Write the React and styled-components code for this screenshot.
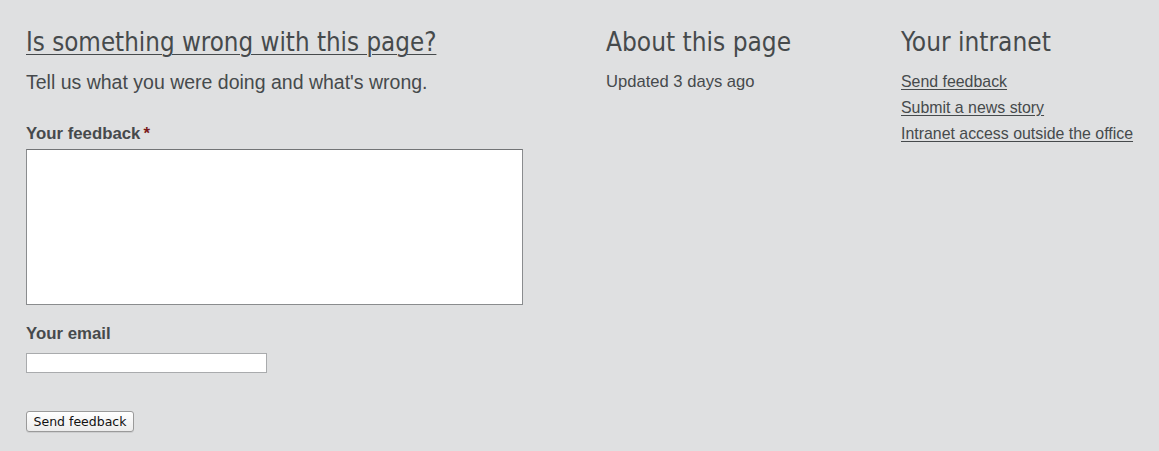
import React from "react";
import styled, { createGlobalStyle } from "styled-components";

const Global = createGlobalStyle`
  html, body { margin: 0; padding: 0; background: #dfe0e1; }
  body { font-family: "Liberation Sans", Arial, sans-serif; color: #464a4c; }
`;

const Page = styled.div`
  display: flex;
  padding: 26px 26px 0 26px;
  min-height: 451px;
  box-sizing: border-box;
`;

const Column = styled.section`
  width: ${(p) => p.$width || "auto"};
  flex: ${(p) => (p.$grow ? 1 : "none")};
  display: flex;
  flex-direction: column;
`;

const Heading = styled.h2`
  margin: 0;
  font-family: "DejaVu Sans Condensed", "Liberation Sans", sans-serif;
  font-weight: normal;
  font-size: ${(p) => p.$size || 26}px;
  line-height: 32px;
  color: #464a4c;
  white-space: nowrap;
`;

const HeadingLink = styled.a`
  color: inherit;
  text-decoration: underline;
  text-underline-offset: 3px;
  text-decoration-thickness: 1px;
`;

const Lead = styled.p`
  margin: 11px 0 0 0;
  font-size: 19.5px;
  line-height: 26px;
`;

const Label = styled.label`
  display: block;
  font-weight: bold;
  font-size: 16.8px;
  line-height: 20px;
  margin-top: ${(p) => p.$top}px;
`;

const Required = styled.span`
  color: #7a1a1a;
  margin-left: 3px;
`;

const TextArea = styled.textarea`
  display: block;
  width: 497px;
  height: 156px;
  box-sizing: border-box;
  margin-top: 5px;
  border: 1px solid #8a8c8e;
  border-top-color: #727476;
  background: #fff;
  resize: none;
  padding: 2px;
`;

const TextInput = styled.input`
  display: block;
  width: 241px;
  height: 20px;
  box-sizing: border-box;
  margin-top: 9px;
  border: 1px solid #a9abad;
  background: #fff;
  padding: 1px 2px;
`;

const Button = styled.button`
  align-self: flex-start;
  margin-top: 38px;
  height: 21px;
  width: 108px;
  padding: 0;
  font-family: "DejaVu Sans", "Liberation Sans", sans-serif;
  font-size: 12.5px;
  color: #111;
  background: linear-gradient(#ffffff, #ececec);
  border: 1px solid #9a9a9a;
  border-radius: 3px;
  box-shadow: 0 1px 0 rgba(0, 0, 0, 0.08);
`;

const Meta = styled.p`
  margin: 11px 0 0 0;
  font-size: 16.6px;
  line-height: 26px;
`;

const LinkList = styled.ul`
  list-style: none;
  margin: 11px 0 0 0;
  padding: 0;
`;

const LinkItem = styled.li`
  font-size: 15.9px;
  line-height: 26px;
  white-space: nowrap;
`;

const Link = styled.a`
  color: #464a4c;
  text-decoration: underline;
  text-underline-offset: 2px;
`;

export default function App() {
  return (
    <>
      <Global />
      <Page>
        <Column $width="580px">
          <Heading $size={25.7}>
            <HeadingLink href="#">Is something wrong with this page?</HeadingLink>
          </Heading>
          <Lead>Tell us what you were doing and what's wrong.</Lead>
          <Label $top={29}>
            Your feedback<Required>*</Required>
          </Label>
          <TextArea />
          <Label $top={19}>Your email</Label>
          <TextInput type="text" />
          <Button type="button">Send feedback</Button>
        </Column>
        <Column $width="295px">
          <Heading>About this page</Heading>
          <Meta>Updated 3 days ago</Meta>
        </Column>
        <Column $grow>
          <Heading>Your intranet</Heading>
          <LinkList>
            <LinkItem><Link href="#">Send feedback</Link></LinkItem>
            <LinkItem><Link href="#">Submit a news story</Link></LinkItem>
            <LinkItem><Link href="#">Intranet access outside the office</Link></LinkItem>
          </LinkList>
        </Column>
      </Page>
    </>
  );
}
